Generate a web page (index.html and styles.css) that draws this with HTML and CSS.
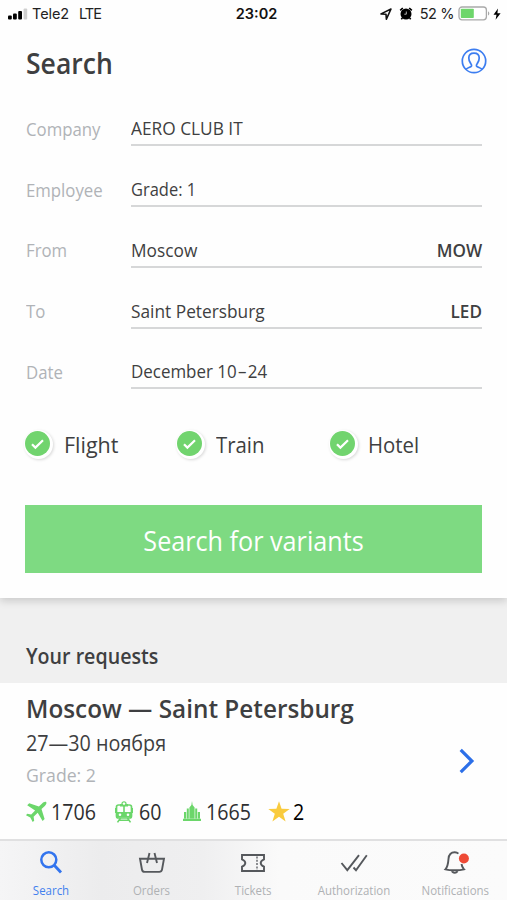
FILE: index.html
```html
<!DOCTYPE html>
<html lang="en">
<head>
<meta charset="utf-8">
<title>Search</title>
<link rel="stylesheet" href="styles.css">
</head>
<body>
<div class="app">
  <section class="panel">
    <div class="status">
      <div class="status-left">
        <svg class="signal" width="20" height="12" viewBox="0 0 20 12"><rect x="0" y="7.5" width="3.8" height="4" rx="1"/><rect x="5" y="5.5" width="3.8" height="6" rx="1"/><rect x="10.2" y="3" width="3.8" height="8.5" rx="1"/><rect x="15.6" y="0.5" width="3.6" height="11" rx="1" fill="#cfcfcf"/></svg>
        <span class="carrier">Tele2</span><span class="net">LTE</span>
      </div>
      <span class="time">23:02</span>
      <div class="status-right">
        <svg width="12" height="12" viewBox="0 0 12 12"><path d="M1 5.9 11 1 6.4 11.2 6 6.3Z" fill="none" stroke="#111" stroke-width="1.6" stroke-linejoin="round"/></svg>
        <svg class="alarm" width="14" height="13" viewBox="0 0 14 13"><circle cx="7" cy="7" r="5.5"/><path d="M1.200 3.400 3.800 1M12.800 3.400 10.200 1M3.400 11 2.300 12.200M10.600 11l1.100 1.200" stroke="#000" stroke-width="1.700"/><path d="M7.300 4.500v2.700H5.300" fill="none" stroke="#fff" stroke-width=".7"/></svg>
        <span class="percent">52 %</span>
        <svg class="battery" width="33" height="15" viewBox="0 0 33 15"><rect x="1" y="1" width="27.4" height="12.8" rx="3" fill="#fff" stroke="#a9a9a9" stroke-width="1.3"/><rect x="2.8" y="2.8" width="13" height="9.2" rx=".8" fill="#6ed66b"/><path d="M30 5.2c1.8.8 1.8 3.6 0 4.4Z" fill="#a9a9a9"/></svg>
        <svg width="8" height="12" viewBox="0 0 8 12"><path d="M5 .5.5 6.8h3L2.6 11.7 7.6 5.2H4.4Z"/></svg>
      </div>
    </div>
    <header class="head">
      <h1>Search</h1>
      <svg width="26" height="26" viewBox="0 0 26 26" fill="none" stroke="#3c7df0" stroke-width="1.7"><circle cx="13" cy="13" r="11.7"/><path d="M5 21.400c.8-1.800 4.600-2 5.500-3.400.6-1.100-.5-2-1.200-3.200C8.300 13.100 7.800 11.600 7.800 9.900 7.800 6.900 10 5.100 13 5.100s5.200 1.800 5.200 4.800c0 1.700-.5 3.200-1.500 4.900-.7 1.200-1.800 2.100-1.200 3.200.9 1.400 4.700 1.600 5.500 3.400"/></svg>
    </header>
    <div class="fields">
      <div class="field"><label>Company</label><div class="value"><span>AERO CLUB IT</span></div></div>
      <div class="field"><label>Employee</label><div class="value"><span class="narrow">Grade: 1</span></div></div>
      <div class="field"><label>From</label><div class="value"><span>Moscow</span><b>MOW</b></div></div>
      <div class="field"><label>To</label><div class="value"><span>Saint Petersburg</span><b>LED</b></div></div>
      <div class="field"><label>Date</label><div class="value"><span class="period">December 10<i>–</i>24</span></div></div>
    </div>
    <div class="checks">
      <div class="check"><span class="dot"><svg width="25" height="25" viewBox="0 0 25 25"><path d="m7 13.200 3.400 3.400L18 9.300"/></svg></span><span class="name wide">Flight</span></div>
      <div class="check"><span class="dot"><svg width="25" height="25" viewBox="0 0 25 25"><path d="m7 13.200 3.400 3.400L18 9.300"/></svg></span><span class="name">Train</span></div>
      <div class="check"><span class="dot"><svg width="25" height="25" viewBox="0 0 25 25"><path d="m7 13.200 3.400 3.400L18 9.300"/></svg></span><span class="name">Hotel</span></div>
    </div>
    <button class="submit"><span>Search for variants</span></button>
  </section>
  <h2>Your requests</h2>
  <section class="card">
    <div class="trip">
      <h3>Moscow — Saint Petersburg</h3>
      <div class="dates">27—30 ноября</div>
      <div class="grade">Grade: 2</div>
      <div class="counts">
        <svg class="plane" width="22" height="22" viewBox="0 0 22 22"><path d="M20.200 1.100c-1.200-.8-2.900.2-4.100 1.400L12.900 5.600 3.200 2.200 1.200 4.200l7.900 5.200L5.200 13.400l-4-.6L0 14.200l4.300 2.400L6.700 21l1.500-1.300-.6-4 4.100-3.900 4.900 8.200 2-2-3.100-9.900 3.300-3.200C19.900 3.900 21 2.200 20.200 1.100Z"/></svg>
        <span class="n1">1706</span>
        <svg class="train" width="18" height="22" viewBox="0 0 18 22"><circle cx="9" cy="2.800" r="2" fill="none" stroke="#6bd66a" stroke-width="1.300"/><rect x="1.500" y="4" width="15" height="13" rx="2" fill="none" stroke="#6bd66a" stroke-width="1.700"/><path d="M1.500 11h15v5.500h-15ZM8.200 5h1.600v7H8.200ZM0 7h1.500v5H0ZM16.500 7H18v5h-1.500ZM5 3h8v2.500H5Z"/><circle cx="9" cy="2.800" r="1.100" fill="#fff"/><circle cx="5" cy="13.700" r="1.300" fill="#fff"/><circle cx="13" cy="13.700" r="1.300" fill="#fff"/><path d="m5.500 17-3 4.400M12.500 17l3 4.400M4.500 19.200h9" stroke="#6bd66a" stroke-width="1.600"/></svg>
        <span class="n2">60</span>
        <svg class="city" width="18" height="21" viewBox="0 0 18 21"><path d="M0 17.800h18V20H0ZM1 11h2.200v6.500H1ZM3.800 7.500h2v10h-2ZM6.400 6.500 8.400 4 9 0l.6 4 2 2.500v11H6.400ZM12.200 7.500h2v10h-2ZM14.800 11H17v6.500h-2.200Z"/></svg>
        <span class="n3">1665</span>
        <svg class="star" width="22" height="21" viewBox="0 0 22 21"><path fill="#f9cb3e" d="m11 .3 2.600 7.500 8.100.1-6.500 4.800 2.400 7.800L11 15.800l-6.600 4.700 2.400-7.800L.3 7.900l8.100-.1Z"/></svg>
        <span class="n4">2</span>
      </div>
    </div>
    <svg class="next" width="16" height="26" viewBox="0 0 16 26"><path d="M1.700 1.800 12.900 13 1.700 24.200" fill="none" stroke="#2c6fe8" stroke-width="3.200"/></svg>
  </section>
  <nav>
    <a class="on"><svg width="28" height="26" viewBox="0 0 28 26"><circle cx="11.800" cy="9.800" r="7.500" stroke-width="2.500"/><path d="m17 15 7 7.500" stroke-width="2.900"/></svg><span>Search</span></a>
    <a><svg width="28" height="26" viewBox="0 0 28 26"><path d="M2 8.700h24l-2 11c-.3 1.500-1.200 2.200-2.700 2.200H6.700C5.200 21.900 4.300 21.200 4 19.700ZM11.500 3 9 13M16.500 3 19 13"/></svg><span>Orders</span></a>
    <a><svg width="28" height="26" viewBox="0 0 28 26"><path d="M3 5h22v4.300c-2.700 1.200-3.300 1.900-3.300 3.700s.6 2.500 3.300 3.700V21H3v-4.300c2.700-1.200 3.300-1.900 3.300-3.700S5.700 10.500 3 9.300Z"/><path d="M18 6.500v14" stroke-width="1.300" stroke-dasharray="2 1.300"/></svg><span>Tickets</span></a>
    <a><svg width="28" height="26" viewBox="0 0 28 26"><path d="m1.500 13 5.800 7.200L19 5.200M13.500 17.500l2.500 2.700L26.800 5.200"/></svg><span>Authorization</span></a>
    <a><svg width="28" height="26" viewBox="0 0 28 26"><path d="M17.400 3.600C16.300 2.500 15 2.200 13.700 2.200c-4.200 0-5.900 2.900-6.200 6.700-.3 4.300-.8 8-3.100 10.400 4.500 1.200 14.100 1.200 18.600 0-1.500-1.500-2.200-3.200-2.500-5.300M10.900 20.800c.8 2.700 4.800 2.700 5.600 0"/><circle cx="22.900" cy="8.500" r="5" fill="#ee4a36" stroke="none"/></svg><span>Notifications</span></a>
  </nav>
</div>
</body>
</html>
```
FILE: styles.css
```css
* { box-sizing: border-box; margin: 0; padding: 0; }
body { background: #f0f0f0; }
svg { display: block; flex: none; }
.app {
  width: 507px; height: 900px; overflow: hidden;
  display: flex; flex-direction: column;
  font-family: "Open Sans", "Noto Sans", sans-serif;
  color: #3e3f41; background: #f0f0f0;
}
/* Slightly condensed lettering */
h1, h2, h3, label, .value span, .value b, .name, .dates, .grade, .counts span {
  transform: scaleX(.935); transform-origin: left center;
}
.panel {
  flex: none; height: 598px; background: #fefefe;
  box-shadow: 0 3px 8px rgba(0, 0, 0, .16);
}
.status {
  height: 28px; padding: 0 6px 1px 8px;
  display: grid; grid-template-columns: 1fr auto 1fr; align-items: center;
  font-family: Inter, sans-serif; font-size: 14.5px; color: #222;
}
.status-left, .status-right { display: flex; align-items: center; }
.status-right { justify-content: flex-end; }
.carrier { margin-left: 4px; letter-spacing: -.1px; }
.net { margin-left: 10px; letter-spacing: -1px; }
.time { font-weight: 600; font-size: 14.5px; padding-left: 4px; color: #111; }
.alarm { margin-left: 7px; }
.percent { margin: 0 4px 0 7px; letter-spacing: -.4px; }
.battery { margin-right: 2px; }
.head {
  height: 57.8px; padding: 9px 20px 0 26px;
  display: flex; align-items: center; justify-content: space-between;
}
h1 { font-size: 29px; font-weight: 600; line-height: 40px; padding-top: 3px; transform: scaleX(.915); }
.field {
  height: 60.7px; padding: 0 25px 0 26px;
  display: grid; grid-template-columns: 104.5px 1fr; align-items: end;
  font-size: 18.5px; line-height: 34px;
}
.field label { color: #b0b3b7; padding-bottom: .5px; transform: scaleX(.907); }
.value {
  display: flex; justify-content: space-between;
  line-height: 32px; padding-top: 2px;
  border-bottom: 2px solid #d6d7d8;
}
.value b { font-weight: 600; transform: scaleX(.925); transform-origin: right center; }
.value i { font-style: normal; margin: 0 1.5px; }
.value .narrow { transform: scaleX(.89); }
.value .period { transform: scaleX(.915); }
.checks { display: flex; margin-top: 34.3px; padding-left: 25px; height: 40px; }
.check { width: 152.4px; display: flex; align-items: center; gap: 13.5px; font-size: 22.5px; }
.name { padding-top: 2px; transform: scaleX(.905); }
.name.wide { transform: scaleX(.955); }
.dot {
  width: 25px; height: 25px; border-radius: 50%; background: #71d46e;
  box-shadow: 1px 1px 0 2px #fff, 2px 2px 3px 2px rgba(0, 0, 0, .15);
}
.dot path { fill: none; stroke: #fff; stroke-width: 2.2; }
.submit {
  display: block; width: 457px; height: 68.4px; margin: 41.4px 0 0 25.4px; padding-top: 5px;
  border: 0; background: #7eda82; color: #fff;
  font: inherit; font-size: 26.5px; line-height: 63px;
}
.submit span { display: block; transform: scaleX(.95); }
h2 {
  flex: none; height: 85px; padding: 37px 26px 0 27.8px;
  font-size: 21px; line-height: 43px; font-weight: 600;
}
.card {
  flex: none; height: 155.5px; padding: 0 32px 0 26px; background: #fefefe;
  display: flex; align-items: center; justify-content: space-between;
}
.trip { height: 100%; }
h3 { font-size: 26px; line-height: 36px; padding-top: 7px; font-weight: 600; white-space: nowrap; }
.dates { font-size: 21px; line-height: 32px; margin-top: 1px; transform: scaleX(.94); }
.grade { font-size: 18.5px; line-height: 32px; color: #b0b3b7; transform: scaleX(.955); }
.counts { display: flex; align-items: center; height: 40px; padding-top: 1px; font-size: 21px; color: #2e2f31; }
.counts svg { fill: #6bd66a; }
.plane { margin-right: 3px; }
.n1 { width: 64px; }
.train { margin-right: 6px; }
.n2 { width: 44px; }
.city { margin-right: 4.5px; }
.n3 { width: 62px; }
.star { margin-right: 3px; }
.n4 { color: #000; }
nav {
  flex: 1; display: grid; grid-template-columns: repeat(5, 101.2px);
  border-top: 2px solid #e0e0e1;
  background: linear-gradient(90deg, #f5f5f6 0, #ececed 20%, #efeff0 40%, #fafafa 55%, #fbfbfb 100%);
}
nav a {
  display: flex; flex-direction: column; align-items: center; padding-top: 9.5px;
  font-size: 12px; line-height: 16px; color: #afb1b4;
}
nav span { transform: scaleX(.955); }
nav svg { fill: none; stroke: #55585c; stroke-width: 1.9; margin-bottom: 7px; }
nav .on { color: #4280ee; }
nav .on svg { stroke: #3274ee; }
```
